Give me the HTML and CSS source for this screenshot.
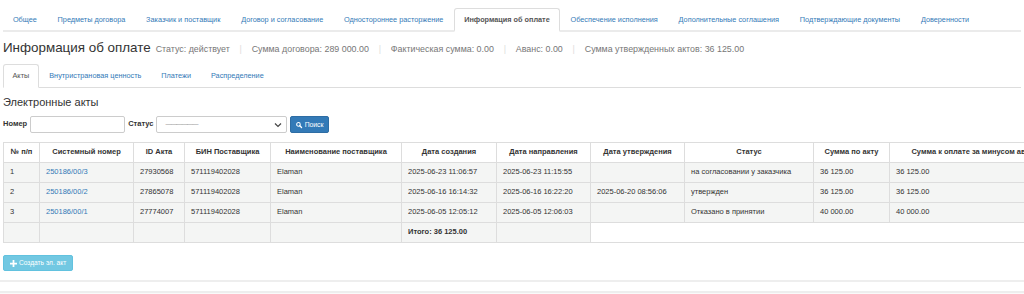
FILE: index.html
```html
<!DOCTYPE html>
<html lang="ru">
<head>
<meta charset="utf-8">
<title>Информация об оплате</title>
<link rel="stylesheet" href="styles.css">
</head>
<body>
<div class="page">
  <ul class="tabs top-tabs">
    <li><a href="#">Общее</a></li>
    <li><a href="#">Предметы договора</a></li>
    <li><a href="#">Заказчик и поставщик</a></li>
    <li><a href="#">Договор и согласование</a></li>
    <li><a href="#">Одностороннее расторжение</a></li>
    <li class="active"><a href="#">Информация об оплате</a></li>
    <li><a href="#">Обеспечение исполнения</a></li>
    <li><a href="#">Дополнительные соглашения</a></li>
    <li><a href="#">Подтверждающие документы</a></li>
    <li><a href="#">Доверенности</a></li>
  </ul>

  <div class="title-row">
    <h1 class="title">Информация об оплате</h1>
    <span class="meta">Статус: действует</span>
    <span class="sep">|</span>
    <span class="meta">Сумма договора: 289 000.00</span>
    <span class="sep">|</span>
    <span class="meta">Фактическая сумма: 0.00</span>
    <span class="sep">|</span>
    <span class="meta">Аванс: 0.00</span>
    <span class="sep">|</span>
    <span class="meta">Сумма утвержденных актов: 36 125.00</span>
  </div>

  <ul class="tabs sub-tabs">
    <li class="active"><a href="#">Акты</a></li>
    <li><a href="#">Внутристрановая ценность</a></li>
    <li><a href="#">Платежи</a></li>
    <li><a href="#">Распределение</a></li>
  </ul>

  <h2 class="section-title">Электронные акты</h2>

  <form class="filter">
    <label class="flabel">Номер</label>
    <input class="finput num" type="text">
    <label class="flabel">Статус</label>
    <div class="fselect">
      <span class="dashes">——————</span>
      <svg class="chev" width="8" height="6" viewBox="0 0 8 6"><path d="M1 1.5 L4 4.5 L7 1.5" fill="none" stroke="#444" stroke-width="1.2"/></svg>
    </div>
    <button type="button" class="btn btn-primary">
      <svg width="8" height="8" viewBox="0 0 10 10"><circle cx="4" cy="4" r="2.9" fill="none" stroke="#fff" stroke-width="1.7"/><path d="M6.2 6.2 L9 9" stroke="#fff" stroke-width="2.2" stroke-linecap="round"/></svg>
      Поиск
    </button>
  </form>

  <div class="table-wrap">
    <table class="grid">
      <thead>
        <tr>
          <th class="c1">№ п/п</th>
          <th class="c2">Системный номер</th>
          <th class="c3">ID Акта</th>
          <th class="c4">БИН Поставщика</th>
          <th class="c5">Наименование поставщика</th>
          <th class="c6">Дата создания</th>
          <th class="c7">Дата направления</th>
          <th class="c8">Дата утверждения</th>
          <th class="c9">Статус</th>
          <th class="c10">Сумма по акту</th>
          <th class="c11">Сумма к оплате за минусом аванса</th>
        </tr>
      </thead>
      <tbody>
        <tr>
          <td>1</td><td><a href="#">250186/00/3</a></td><td>27930568</td><td>571119402028</td><td>Elaman</td>
          <td>2025-06-23 11:06:57</td><td>2025-06-23 11:15:55</td><td></td>
          <td>на согласовании у заказчика</td><td>36 125.00</td><td>36 125.00</td>
        </tr>
        <tr>
          <td>2</td><td><a href="#">250186/00/2</a></td><td>27865078</td><td>571119402028</td><td>Elaman</td>
          <td>2025-06-16 16:14:32</td><td>2025-06-16 16:22:20</td><td>2025-06-20 08:56:06</td>
          <td>утвержден</td><td>36 125.00</td><td>36 125.00</td>
        </tr>
        <tr>
          <td>3</td><td><a href="#">250186/00/1</a></td><td>27774007</td><td>571119402028</td><td>Elaman</td>
          <td>2025-06-05 12:05:12</td><td>2025-06-05 12:06:03</td><td></td>
          <td>Отказано в принятии</td><td>40 000.00</td><td>40 000.00</td>
        </tr>
        <tr class="total">
          <td></td><td></td><td></td><td></td><td></td>
          <td><b>Итого: 36 125.00</b></td><td></td>
          <td class="blank"></td><td class="blank"></td><td class="blank"></td><td class="blank"></td>
        </tr>
      </tbody>
    </table>
  </div>

  <div class="actions">
    <button type="button" class="btn btn-info">
      <svg width="7" height="7" viewBox="0 0 8 8"><path d="M3 0h2v3h3v2H5v3H3V5H0V3h3z" fill="#fff"/></svg>
      Создать эл. акт
    </button>
  </div>
</div>
<div class="rule"></div>
<div class="footer-band"></div>
</body>
</html>
```

FILE: styles.css
```css
* { box-sizing: border-box; }
html, body { margin: 0; padding: 0; background: #fff; overflow: hidden; }
body {
  font-family: "Liberation Sans", Arial, sans-serif;
  font-size: 7.5px;
  line-height: 10.7px;
  color: #333;
}
a { color: #337ab7; text-decoration: none; }
.page { padding: 8px 3px 0 3px; }

.tabs {
  list-style: none;
  margin: 0;
  padding: 0;
  display: flex;
  font-size: 7.3px;
  line-height: 10px;
}
.tabs li { margin-right: 1px; }
.tabs li a {
  display: block;
  padding: 5.5px 8.9px;
  border: 1px solid transparent;
  border-radius: 3px 3px 0 0;
  white-space: nowrap;
}
.tabs li.active a {
  color: #555;
  background: #fff;
  border-color: #ddd #ddd #fff #ddd;
}
.top-tabs { border-bottom: 2px solid #ebebeb; }
.top-tabs li { margin-bottom: -2px; }
.top-tabs li.active a { font-weight: bold; border-bottom: 2px solid #fff; }
.sub-tabs { border-bottom: 1px solid #ddd; }
.sub-tabs li { margin-bottom: -1px; }
.sub-tabs li a { padding: 6px 8.5px; }

.title-row {
  display: flex;
  align-items: baseline;
  margin: 7px 0 8px 0;
  height: 17px;
  white-space: nowrap;
}
.title {
  margin: 0 5px 0 0;
  font-size: 13.4px;
  line-height: 17px;
  font-weight: normal;
  color: #333;
}
.meta { font-size: 8.9px; color: #777; }
.sep { font-size: 8.9px; color: #ddd; margin: 0 9.8px; }

.section-title {
  margin: 8px 0 7px 0;
  font-size: 11px;
  line-height: 13px;
  font-weight: normal;
  color: #333;
}

.filter { display: flex; align-items: center; gap: 3px; height: 17px; }
.flabel { font-weight: bold; color: #333; }
.finput {
  height: 17px;
  border: 1px solid #ccc;
  border-radius: 2px;
  background: #fff;
  padding: 0;
}
.finput.num { width: 95px; }
.fselect {
  width: 131px;
  height: 17px;
  border: 1px solid #ccc;
  border-radius: 2px;
  display: flex;
  align-items: center;
  justify-content: space-between;
  padding: 0 4px 0 8px;
  color: #555;
}
.dashes { font-size: 6px; letter-spacing: -0.6px; color: #777; }
.btn {
  font-family: inherit;
  font-size: 6.8px;
  line-height: 10px;
  height: 17px;
  border-radius: 2px;
  display: inline-flex;
  align-items: center;
  gap: 2px;
  padding: 0 5px;
  color: #fff;
  cursor: pointer;
}
.btn-primary { background: #337ab7; border: 1px solid #2e6da4; width: 39px; }
.btn-info {
  background: #72c8e2;
  border: 1px solid #62c2df;
  height: 16px;
  padding: 0 6px;
  font-size: 6.6px;
}

.table-wrap { margin-top: 9px; width: 1200px; }
.grid {
  border-collapse: collapse;
  table-layout: fixed;
  width: 1061px;
  white-space: nowrap;
}
.grid th, .grid td {
  border: 1px solid #ddd;
  padding: 4px 6px 4px 6px;
  text-align: left;
  overflow: hidden;
  height: 20px;
}
.grid th { font-weight: bold; text-align: center; background: #fff; color: #333; }
.grid tbody td { background: #f4f5f4; }
.grid tbody td.blank { background: #fff; border-left: none; border-right: none; }
.c1 { width: 36px; }
.c2 { width: 94px; }
.c3 { width: 51px; }
.c4 { width: 86px; }
.c5 { width: 131px; }
.c6 { width: 95px; }
.c7 { width: 94px; }
.c8 { width: 94px; }
.c9 { width: 129px; }
.c10 { width: 76px; }
.c11 { width: 175px; }

.actions { margin-top: 12px; height: 16px; display: flex; }
.rule { margin-top: 9px; border-top: 2px solid #eee; }
.footer-band { margin-top: 9px; border-top: 2px solid #eee; background: #fafafa; height: 20px; }
```
